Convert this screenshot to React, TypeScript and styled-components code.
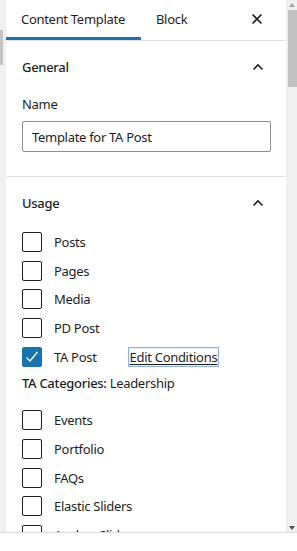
import styled, {createGlobalStyle} from "styled-components";

const GlobalStyle = createGlobalStyle`
  html, body {
    margin: 0;
    padding: 0;
    background: #fff;
  }
  body {
    font-family: "Noto Sans", "Open Sans", sans-serif;
    letter-spacing: -0.3px;
    color: #1e1e1e;
  }
`;

const Frame = styled.div`
  width: 297px;
  height: 551px;
  display: flex;
  flex-direction: column;
  background: #fff;
`;
const Viewport = styled.div`
  height: 532px;
  display: flex;
  border-bottom: 1px solid #dcdcdc;
`;
const LeftStrip = styled.div`
  width: 6px;
  background: #f0f0f0;
  padding-top: 30px;
  box-sizing: border-box;
`;
const LeftThumb = styled.div`
  width: 3px;
  height: 35px;
  background: #c4c4c4;
`;
const Panel = styled.div`
  flex: 1;
  overflow: hidden;
  background: #fff;
`;
const ScrollTrack = styled.div`
  width: 11px;
  background: #f0f0f0;
  display: flex;
  flex-direction: column;
  align-items: flex-end;
`;
const Arrow = styled.div<{$down?: boolean}>`
  width: 11px;
  height: 9px;
  display: flex;
  align-items: center;
  justify-content: center;
  margin-top: ${(p) => (p.$down ? "auto" : "0")};
  margin-bottom: ${(p) => (p.$down ? "0" : "1px")};
  &::after {
    content: "";
    border-left: 3px solid transparent;
    border-right: 3px solid transparent;
    ${(p) =>
      p.$down
        ? "border-top: 4px solid #505050;"
        : "border-bottom: 4px solid #a3a3a3;"}
  }
`;
const Thumb = styled.div`
  width: 9px;
  height: 77px;
  background: #c1c1c1;
`;

const Header = styled.div`
  height: 40px;
  display: flex;
  align-items: stretch;
  border-bottom: 1px solid #e0e0e0;
`;
const Tab = styled.div<{$active?: boolean}>`
  display: flex;
  align-items: center;
  padding: 0 16px 3px 15px;
  font-size: 13px;
  box-shadow: ${(p) => (p.$active ? "inset 0 -3px 0 #1e73a9" : "none")};
`;
const Close = styled.div`
  margin-left: auto;
  width: 40px;
  margin-right: 9px;
  display: flex;
  align-items: center;
  justify-content: center;
  padding-bottom: 3px;
`;

const Section = styled.div<{$border?: boolean}>`
  border-bottom: ${(p) => (p.$border ? "1px solid #e0e0e0" : "none")};
  padding: 0 15px 0 16px;
`;
const SectionTitle = styled.div`
  height: 52px;
  display: flex;
  align-items: center;
  justify-content: space-between;
  font-size: 13px;
  font-weight: 500;
`;
const Chevron = styled.div`
  width: 24px;
  display: flex;
  justify-content: center;
  margin-right: 1px;
`;
const Label = styled.div`
  font-size: 13px;
  line-height: 18px;
  margin: 2px 0 8px;
`;
const Input = styled.div`
  height: 31px;
  box-sizing: border-box;
  border: 1px solid #8c8f94;
  border-radius: 2px;
  padding: 0 9px;
  display: flex;
  align-items: center;
  font-size: 13px;
  margin-bottom: 24px;
`;
const CheckList = styled.div`
  display: flex;
  flex-direction: column;
  gap: 8.7px;
  padding-top: 3px;
`;
const Row = styled.div`
  display: flex;
  align-items: center;
  height: 20px;
  font-size: 13px;
`;
const Box = styled.div<{$checked?: boolean}>`
  width: 20px;
  height: 20px;
  box-sizing: border-box;
  border: 1px solid ${(p) => (p.$checked ? "#1a72ae" : "#1e1e1e")};
  background: ${(p) => (p.$checked ? "#1a72ae" : "#fff")};
  border-radius: 2px;
  margin-right: 12px;
  display: flex;
  align-items: center;
  justify-content: center;
  flex-shrink: 0;
`;
const EditButton = styled.div`
  margin-left: 31px;
  height: 20px;
  box-sizing: border-box;
  padding: 0 1px;
  border: 1px solid #8fb4de;
  box-shadow: inset 0 0 0 1px #e3edf8;
  display: flex;
  align-items: center;
  font-size: 13px;
  text-decoration: underline;
  text-underline-offset: 2px;
`;
const Categories = styled.div`
  font-size: 13px;
  line-height: 18px;
  margin: -1px 0 9px;
  b {
    font-weight: 500;
  }
`;

const ChevronUp = () => (
  <svg width="12" height="8" viewBox="0 0 12 8">
    <path d="M1.5 6.5 L6 2 L10.5 6.5" fill="none" stroke="#1e1e1e" strokeWidth="1.6" />
  </svg>
);
const CloseIcon = () => (
  <svg width="12" height="12" viewBox="0 0 12 12">
    <path d="M1.5 1.5 L10.5 10.5 M10.5 1.5 L1.5 10.5" stroke="#1e1e1e" strokeWidth="1.6" />
  </svg>
);
const Check = () => (
  <svg width="16" height="16" viewBox="0 0 16 16">
    <path d="M2.5 8.5 L6 12 L13.5 3" fill="none" stroke="#fff" strokeWidth="1.3" />
  </svg>
);

const postTypes = ["Posts", "Pages", "Media", "PD Post"];
const moreTypes = ["Events", "Portfolio", "FAQs", "Elastic Sliders", "Anchor Sliders"];

export default function App() {
  return (
    <>
      <GlobalStyle />
      <Frame>
        <Viewport>
          <LeftStrip>
            <LeftThumb />
          </LeftStrip>
          <Panel>
            <Header>
              <Tab $active>Content Template</Tab>
              <Tab>Block</Tab>
              <Close>
                <CloseIcon />
              </Close>
            </Header>
            <Section $border>
              <SectionTitle>
                General
                <Chevron>
                  <ChevronUp />
                </Chevron>
              </SectionTitle>
              <Label>Name</Label>
              <Input>Template for TA Post</Input>
            </Section>
            <Section>
              <SectionTitle>
                Usage
                <Chevron>
                  <ChevronUp />
                </Chevron>
              </SectionTitle>
              <CheckList>
                {postTypes.map((t) => (
                  <Row key={t}>
                    <Box />
                    {t}
                  </Row>
                ))}
                <Row>
                  <Box $checked>
                    <Check />
                  </Box>
                  TA Post
                  <EditButton>Edit Conditions</EditButton>
                </Row>
                <Categories>
                  <b>TA Categories:</b> Leadership
                </Categories>
                {moreTypes.map((t) => (
                  <Row key={t}>
                    <Box />
                    {t}
                  </Row>
                ))}
              </CheckList>
            </Section>
          </Panel>
          <ScrollTrack>
            <Arrow />
            <Thumb />
            <Arrow $down />
          </ScrollTrack>
        </Viewport>
      </Frame>
    </>
  );
}
